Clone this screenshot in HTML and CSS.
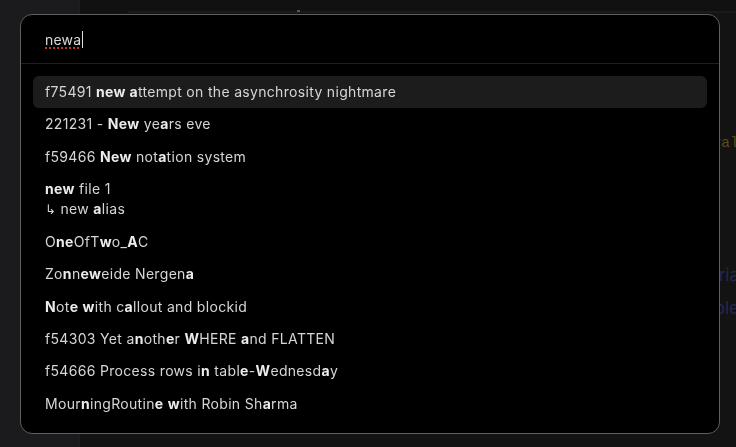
FILE: index.html
```html
<!DOCTYPE html>
<html lang="en">

<head>
    <meta charset="UTF-8">
    <meta name="viewport" content="width=device-width, initial-scale=1.0">
    <title>Quick switcher</title>
    <link rel="stylesheet" href="styles.css">
</head>

<body>
    <div class="workspace">
        <div class="ribbon"></div>
        <div class="main">
            <div class="tab-header">
                <div class="tab-strip"><span class="tab-dot"></span></div>
            </div>
            <div class="editor">
                <div class="line"></div>
                <div class="line"></div>
                <div class="line"></div>
                <div class="line code">let val</div>
                <div class="line"></div>
                <div class="line"></div>
                <div class="line"></div>
                <div class="line link">Materia</div>
                <div class="line link">Variable</div>
            </div>
        </div>
    </div>

    <!-- Quick switcher -->
    <div class="prompt">
        <div class="prompt-input">
            <span class="typed">newa</span><span class="caret"></span>
        </div>
        <div class="prompt-results">
            <div class="suggestion is-selected">f75491 <b>new a</b>ttempt on the asynchrosity nightmare</div>
            <div class="suggestion">221231 - <b>New</b> ye<b>a</b>rs eve</div>
            <div class="suggestion">f59466 <b>New</b> not<b>a</b>tion system</div>
            <div class="suggestion">
                <div><b>new</b> file 1</div>
                <div class="alias"><span class="alias-arrow">↳</span> new <b>a</b>lias</div>
            </div>
            <div class="suggestion">O<b>ne</b>OfT<b>w</b>o_<b>A</b>C</div>
            <div class="suggestion">Zo<b>n</b>n<b>ew</b>eide Nergen<b>a</b></div>
            <div class="suggestion"><b>N</b>ot<b>e</b> <b>w</b>ith c<b>a</b>llout and blockid</div>
            <div class="suggestion">f54303 Yet a<b>n</b>oth<b>e</b>r <b>W</b>HERE <b>a</b>nd FLATTEN</div>
            <div class="suggestion">f54666 Process rows i<b>n</b> tabl<b>e</b>-<b>W</b>ednesd<b>a</b>y</div>
            <div class="suggestion">Mour<b>n</b>ingRoutin<b>e</b> <b>w</b>ith Robin Sh<b>a</b>rma</div>
        </div>
    </div>
</body>

</html>
```

FILE: styles.css
```css
/* Reset */
* {
    margin: 0;
    padding: 0;
    box-sizing: border-box;
}

body {
    background: #131313;
    font-family: Inter, "Noto Sans", sans-serif;
    color: #dadada;
    height: 100vh;
    overflow: hidden;
}

/* Workspace behind the switcher */
.workspace {
    display: flex;
    height: 100%;
}

.ribbon {
    width: 80px;
    background: #1b1b1d;
    border-right: 1px solid #1e1e1e;
}

.main {
    flex: 1;
    display: flex;
    flex-direction: column;
    overflow: hidden;
}

.tab-header {
    height: 13px;
    background: #111111;
    padding-left: 48px;
    display: flex;
    align-items: flex-end;
}

.tab-strip {
    flex: 1;
    height: 2px;
    background: #1a1a1a;
    position: relative;
}

.tab-dot {
    position: absolute;
    left: 169px;
    top: -1px;
    width: 3px;
    height: 2px;
    background: #555;
}

.editor {
    flex: 1;
    padding-top: 15px;
}

.line {
    height: 33px;
    line-height: 33px;
    text-align: right;
    white-space: nowrap;
    margin-right: -3px;
}

.line.code {
    font-family: "Liberation Mono", monospace;
    font-size: 15px;
    color: #57491d;
}

.line.link {
    font-size: 17px;
    color: #27264e;
}

/* Quick switcher */
.prompt {
    position: fixed;
    top: 14px;
    left: 20px;
    width: 700px;
    height: 420px;
    background: #000000;
    border: 1px solid #5f5f5f;
    border-radius: 12px;
    display: flex;
    flex-direction: column;
    overflow: hidden;
}

.prompt-input {
    height: 49px;
    border-bottom: 1px solid #1f1f1f;
    padding: 0 24px;
    display: flex;
    align-items: center;
    font-size: 14px;
    letter-spacing: 0.2px;
    color: #dadada;
}

.typed {
    text-decoration: underline dotted #c0392b;
    text-decoration-thickness: 2px;
    text-underline-offset: 3px;
}

.caret {
    width: 1px;
    height: 17px;
    margin-left: 1px;
    background: #e0e0e0;
}

.prompt-results {
    padding: 12px;
}

.suggestion {
    padding: 6px 12px;
    font-size: 14px;
    letter-spacing: 0.32px;
    line-height: 1.45;
    border-radius: 6px;
    color: #d6d6d6;
    white-space: nowrap;
}

.suggestion b {
    font-weight: 700;
    color: #ececec;
}

.suggestion.is-selected {
    background: #1c1c1c;
}

.alias-arrow {
    font-family: "DejaVu Sans", sans-serif;
    font-size: 13px;
}
```
